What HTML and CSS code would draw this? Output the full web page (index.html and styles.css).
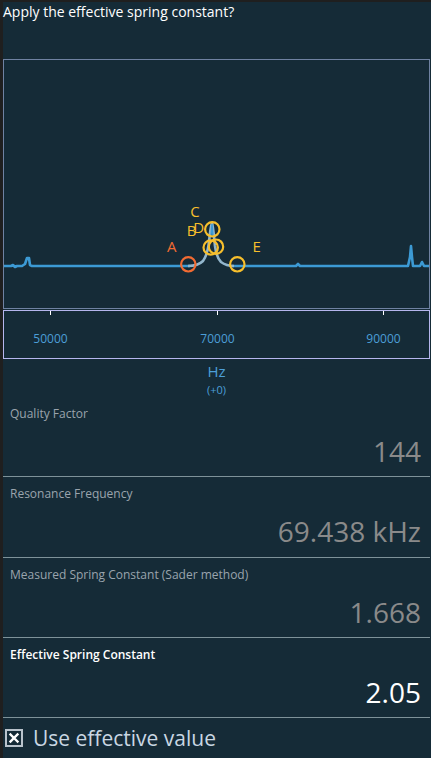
FILE: index.html
```html
<!DOCTYPE html>
<html>
<head>
<meta charset="utf-8">
<link rel="stylesheet" href="styles.css">
</head>
<body>
<div class="panel">
  <div class="title">Apply the effective spring constant?</div>
  <div class="plot">
    <svg class="plot-svg" viewBox="4 60 425 248" width="425" height="248">
      <path class="trace" d="M4 266 L11 266 L13 265 L15 267 L17 266 L22 266 L25 264 L27 258 L29 258 L30 265 L32 266 L190 266 M232 266 L296 266 L298 264 L300 266 L408 266 L410 257 L411 246 L412 257 L413 266 L420 266 L422 262 L424 266 L429 266"/>
      <path class="peak" d="M188 266 C196 266 200 264 203 261 C206 257 208 250 209 242 C210 232 211 226 212 223 C213 226 214 236 215 246 C216 254 218 259 221 262 C225 265 229 266 234 266"/>
      <path class="peak-core" d="M211 236 L212 224 L213 236"/>
      <circle class="mk orange" cx="188.3" cy="264.3" r="7.2"/>
      <circle class="mk yellow" cx="212.3" cy="229.3" r="7.2"/>
      <circle class="mk yellow" cx="210.7" cy="247.5" r="7.2"/>
      <circle class="mk yellow" cx="216" cy="246.7" r="7.2"/>
      <circle class="mk yellow" cx="237.3" cy="264.3" r="7.2"/>
      <text class="lbl orange-t" x="171.7" y="251.5">A</text>
      <text class="lbl yellow-t" x="195" y="216.5">C</text>
      <text class="lbl yellow-t" x="191.7" y="235.5">B</text>
      <text class="lbl yellow-t" x="198.8" y="233">D</text>
      <text class="lbl yellow-t" x="256.7" y="251.5">E</text>
    </svg>
  </div>
  <div class="axis">
    <svg class="axis-svg" viewBox="4 311 425 47" width="425" height="47">
      <line class="tick" x1="50.5" y1="311" x2="50.5" y2="315"/>
      <line class="tick" x1="217.5" y1="311" x2="217.5" y2="315"/>
      <line class="tick" x1="383.5" y1="311" x2="383.5" y2="315"/>
      <text class="tick-lbl" x="50.5" y="342.5">50000</text>
      <text class="tick-lbl" x="217.5" y="342.5">70000</text>
      <text class="tick-lbl" x="383.5" y="342.5">90000</text>
    </svg>
  </div>
  <div class="unit">Hz</div>
  <div class="offset">(+0)</div>
  <div class="field">
    <div class="field-label">Quality Factor</div>
    <div class="field-value">144</div>
  </div>
  <div class="field">
    <div class="field-label">Resonance Frequency</div>
    <div class="field-value">69.438 kHz</div>
  </div>
  <div class="field">
    <div class="field-label">Measured Spring Constant (Sader method)</div>
    <div class="field-value">1.668</div>
  </div>
  <div class="field active">
    <div class="field-label">Effective Spring Constant</div>
    <div class="field-value">2.05</div>
  </div>
  <div class="check-row">
    <span class="checkbox">
      <svg viewBox="0 0 18 18" width="18" height="18">
        <rect x="1" y="1" width="16" height="16" fill="none" stroke="#b9c3cc" stroke-width="2"/>
        <path d="M5.5 5.5 L12.5 12.5 M12.5 5.5 L5.5 12.5" stroke="#ffffff" stroke-width="2.4" stroke-linecap="square"/>
      </svg>
    </span>
    <span class="check-text">Use effective value</span>
  </div>
</div>
</body>
</html>
```

FILE: styles.css
```css
html, body {
  margin: 0;
  padding: 0;
  background: #1f1f1f;
}
body {
  font-family: "Open Sans", "Noto Sans", sans-serif;
  width: 431px;
  height: 758px;
  overflow: hidden;
}
.panel {
  margin: 2px 0 0 3px;
  width: 428px;
  height: 756px;
  background: #152b37;
  display: flex;
  flex-direction: column;
}
.title {
  color: #ffffff;
  font-size: 14px;
  line-height: 20px;
  height: 20px;
  white-space: nowrap;
}
.plot {
  margin-top: 37px;
  width: 427px;
  height: 250px;
  box-sizing: border-box;
  border: 1px solid #6f82a2;
}
.plot-svg, .axis-svg {
  display: block;
}
.trace {
  fill: none;
  stroke: #3c9ad4;
  stroke-width: 2.6;
  stroke-linejoin: round;
}
.peak {
  fill: none;
  stroke: #92b6cc;
  stroke-width: 2.6;
  stroke-linejoin: round;
}
.peak-core {
  fill: none;
  stroke: #3c9ad4;
  stroke-width: 1.4;
}
.mk {
  fill: none;
  stroke-width: 2.2;
}
.orange { stroke: #f26b32; }
.yellow { stroke: #f7bf2c; }
.lbl {
  font-family: "Open Sans", sans-serif;
  font-size: 15px;
  text-anchor: middle;
}
.orange-t { fill: #f26b32; }
.yellow-t { fill: #f7bf2c; }
.axis {
  margin-top: 1px;
  width: 427px;
  height: 49px;
  box-sizing: border-box;
  border: 1px solid #b6b6ee;
}
.tick {
  stroke: #ffffff;
  stroke-width: 1;
}
.tick-lbl {
  fill: #4c9fd8;
  font-size: 12px;
  text-anchor: middle;
}
.unit {
  width: 427px;
  text-align: center;
  color: #4c9fd8;
  font-size: 15px;
  line-height: 18px;
  margin-top: 3px;
}
.offset {
  width: 427px;
  text-align: center;
  color: #4c9fd8;
  font-size: 11px;
  line-height: 14px;
  margin-top: 3px;
}
.field {
  width: 427px;
  box-sizing: border-box;
  height: 81px;
  border-bottom: 1px solid #7e9299;
  padding: 9px 9px 0 7px;
}
.field:first-of-type {
  height: 80px;
}
.field-label {
  color: #9aa4ad;
  font-size: 12px;
  line-height: 16px;
  white-space: nowrap;
}
.field-value {
  margin-top: 11px;
  text-align: right;
  color: #8a8a8a;
  font-size: 28px;
  line-height: 36px;
}
.field.active .field-label {
  color: #ffffff;
  font-weight: 600;
}
.field.active .field-value {
  color: #ffffff;
}
.check-row {
  display: flex;
  align-items: center;
  height: 40px;
  gap: 10px;
  padding-left: 2px;
}
.checkbox {
  display: block;
  width: 18px;
  height: 18px;
}
.checkbox svg {
  display: block;
}
.check-text {
  color: #c9d7e3;
  font-size: 21px;
  line-height: 24px;
}
```
